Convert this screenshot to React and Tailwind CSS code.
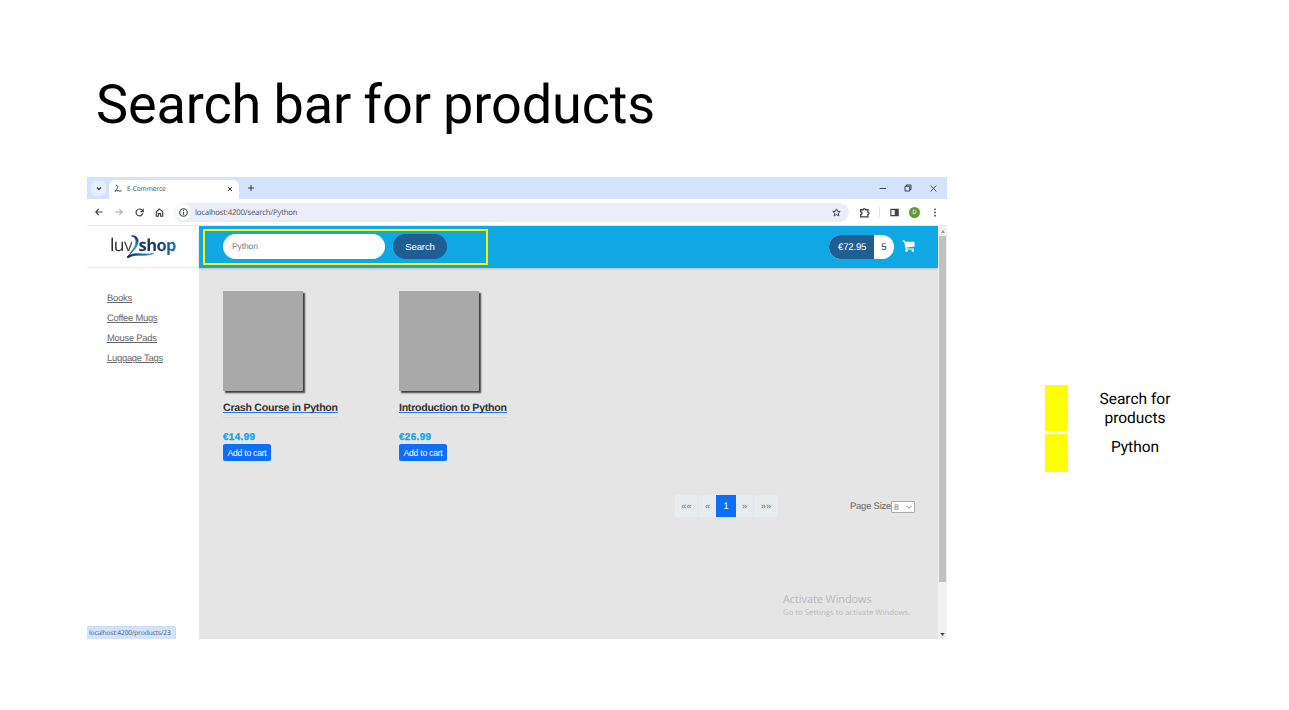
import React from "react";

const segoe = "font-['Open_Sans','Noto_Sans',sans-serif]";

function Stroke({ className, children, width = 1.2, box = "0 0 12 12" }) {
  return (
    <svg viewBox={box} className={`shrink-0 ${className}`} fill="none" stroke="currentColor" strokeWidth={width}>
      {children}
    </svg>
  );
}

function TabStrip() {
  return (
    <div className="flex h-[22px] shrink-0 bg-[#d3e3fd] text-[#303236]">
      <div className="mt-[4px] ml-[4px] flex h-[15px] w-[15px] items-center justify-center rounded-[5px] bg-[#e6effe]">
        <Stroke className="h-[6px] w-[6px]" width={2.2}><path d="M2 3l4 4 4-4" /></Stroke>
      </div>
      <div className="mt-[3px] ml-[3px] flex h-[19px] w-[130px] items-center rounded-t-[6px] bg-white pr-[6px] pb-[2px] pl-[5px]">
        <svg viewBox="0 0 10 10" className="h-[9px] w-[8px] shrink-0" fill="none">
          <path d="M2 1.2C5 0 5.6 3 4 5L1.5 8.2" stroke="#1577bd" strokeWidth="1.2" />
          <path d="M1 8.8C4 6.2 6 9 9.5 8" stroke="#183f70" strokeWidth="1.2" />
        </svg>
        <span className={`${segoe} ml-[5px] flex-1 text-[6.7px] leading-[10px] tracking-[-0.12px] text-[#45474b]`}>E-Commerce</span>
        <Stroke className="h-[6px] w-[6px]" width={2}><path d="M2 2l8 8M10 2l-8 8" /></Stroke>
      </div>
      <Stroke className="mt-[8px] ml-[9px] h-[6px] w-[6px]" width={1.9}><path d="M6 0v12M0 6h12" /></Stroke>
      <div className="mt-[8px] mr-[10px] ml-auto flex h-[6px] items-center gap-[18px]">
        <Stroke className="h-[7px] w-[7px]" width={1.5}><path d="M1 6h11" /></Stroke>
        <Stroke className="h-[8px] w-[8px]" width={1.4}><path d="M1.5 3.5h7v7h-7zM3.5 3V1.5h7v7H9" /></Stroke>
        <Stroke className="h-[7px] w-[7px]" width={1.4}><path d="M1 1l10 10M11 1L1 11" /></Stroke>
      </div>
    </div>
  );
}

function Toolbar() {
  return (
    <div className="flex h-[27px] shrink-0 items-center border-b border-[#e7ebf1] bg-white text-[#3d4043]">
      <Stroke className="ml-[8px] h-[8px] w-[8px]" width={1.6}><path d="M11.5 6H1M5.5 1.5L1 6l4.5 4.5" /></Stroke>
      <Stroke className="ml-[12px] h-[8px] w-[8px] text-[#8f9194]" width={1.4}><path d="M.5 6H11M6.5 1.5L11 6l-4.5 4.5" /></Stroke>
      <Stroke className="ml-[12px] h-[9px] w-[9px]" width={1.5}><path d="M10.4 7.2A4.6 4.6 0 1 1 9.5 3L11 4.6M11 1v3.8H7.2" /></Stroke>
      <Stroke className="ml-[11px] h-[9px] w-[9px]" width={1.5}><path d="M1.7 5L6 1.2 10.3 5v6H7.5V7.5h-3V11H1.7z" /></Stroke>
      <div className="ml-[10px] flex h-[19px] w-[675px] items-center rounded-full bg-[#ebeef7] pr-[8px] pl-[1px]">
        <div className="flex h-[16px] w-[16px] items-center justify-center rounded-full bg-white">
          <Stroke className="h-[9px] w-[9px]" width={1.5}><circle cx="6" cy="6" r="5" /><path d="M6 5.2V9M6 2.8v1.4" /></Stroke>
        </div>
        <span className={`${segoe} ml-[4px] flex-1 pt-[1px] text-[7.8px] leading-[12px] tracking-[-0.2px] text-[#505257]`}>localhost:4200/search/Python</span>
        <Stroke className="h-[9px] w-[9px]" width={1.3}><path d="M6 1.2l1.4 3.2 3.5.3-2.6 2.4.8 3.5L6 8.8l-3.1 1.8.8-3.5L1.1 4.7l3.5-.3z" /></Stroke>
      </div>
      <Stroke className="ml-[10px] h-[11px] w-[11px]" width={1.4}><path d="M1.8 3h2.7a1.3 1.3 0 0 1 2.6 0h2.6v2.6a1.3 1.3 0 0 1 0 2.6v2.6H1.8V8.4a1.5 1.5 0 0 0 0-3z" /></Stroke>
      <div className="ml-[9px] h-[10px] w-px bg-[#d3e3fd]" />
      <Stroke className="ml-[10px] h-[9px] w-[9px]" width={1.5}><path d="M1.2 1.8h9.6v8.4H1.2z" /><path d="M7 2h3.5v8H7z" fill="currentColor" /></Stroke>
      <div className="ml-[10px] flex h-[11px] w-[11px] items-center justify-center rounded-full bg-[#5f9c34] pt-[1px] font-['Roboto',sans-serif] text-[6px] leading-none text-white">D</div>
      <svg viewBox="0 0 4 12" className="ml-[13px] h-[9px] w-[4px]" fill="currentColor"><circle cx="2" cy="1.8" r="1.2" /><circle cx="2" cy="6" r="1.2" /><circle cx="2" cy="10.2" r="1.2" /></svg>
    </div>
  );
}

function Logo() {
  return (
    <div className="relative ml-[23px] mt-[8px] flex h-[25px] w-[67px] leading-[22px]">
      <span className="w-[22px] bg-gradient-to-r from-[#111] to-[#555] bg-clip-text font-['Open_Sans',sans-serif] text-[17.5px] tracking-[-0.6px] text-transparent">luv</span>
      <span className="ml-[6.5px] bg-gradient-to-r from-[#173768] via-[#173768] to-[#1780c0] bg-clip-text font-['Open_Sans',sans-serif] text-[16.5px] font-bold tracking-[-0.55px] text-transparent">shop</span>
      <svg viewBox="0 0 44 26" className="absolute top-[1px] left-[15px] h-[26px] w-[44px]" fill="none">
        <defs>
          <linearGradient id="swoosh" x1="0" x2="1"><stop stopColor="#0b1525" /><stop offset=".4" stopColor="#16589a" /><stop offset="1" stopColor="#36a9df" /></linearGradient>
          <linearGradient id="stem" x1="0" y1="0" x2="0" y2="1"><stop stopColor="#0f2a55" /><stop offset=".45" stopColor="#1a8fd0" /><stop offset="1" stopColor="#16589a" /></linearGradient>
        </defs>
        <path d="M6.5.8C14 .4 15 7 10.5 13L2.5 22l5.5-7.5C12 9 12.5 2.5 6.5.8z" fill="url(#stem)" stroke="url(#stem)" strokeWidth=".8" />
        <path d="M2 22.3C9 15.5 18 20.8 29 18.3c-10 4.4-17.4-.6-25.4 4.2z" fill="url(#swoosh)" stroke="url(#swoosh)" strokeWidth=".8" />
      </svg>
    </div>
  );
}

function Sidebar() {
  return (
    <aside className="flex w-[112px] shrink-0 flex-col bg-white">
      <div className="h-[42px] shrink-0 border-b border-[#ececec] shadow-[0_1px_2px_#0000000d]"><Logo /></div>
      <nav className="mt-[20px] flex flex-col pl-[20px] text-[9.4px] leading-[20.1px] tracking-[-0.24px] text-[#666] underline">
        <a>Books</a>
        <a>Coffee Mugs</a>
        <a>Mouse Pads</a>
        <a>Luggage Tags</a>
      </nav>
      <div className={`${segoe} mt-auto h-[13px] w-[89px] rounded-tr-[3px] border-t border-r border-[#c9d9f3] bg-[#d3e3fd] pl-[2px] text-[6.6px] leading-[12px] tracking-[-0.1px] text-[#55585f]`}>localhost:4200/products/23</div>
    </aside>
  );
}

function ShopHeader() {
  return (
    <header className="flex h-[42px] shrink-0 bg-[#0fa8e5] shadow-[0_1px_2px_#00000030]">
      <div className="mt-[3px] ml-[4px] flex h-[36px] w-[285px] items-center border-2 border-[#fff000] pb-[1px] pl-[18px]">
        <div className="flex h-[25px] w-[162px] items-center rounded-full bg-white pl-[9px] text-[8.5px] tracking-[-0.1px] text-[#777]">Python</div>
        <button className="ml-[8px] h-[25px] w-[54px] rounded-full bg-[#205d91] text-[9.6px] leading-[25px] tracking-[-0.15px] text-white">Search</button>
      </div>
      <div className="mt-[9px] mr-[8px] ml-auto flex h-[24px] w-[65px] overflow-hidden rounded-full bg-white text-[9.6px] leading-[25px]">
        <span className="w-[45px] bg-[#205d91] pl-[9px] tracking-[-0.18px] text-white">€72.95</span>
        <span className="flex-1 text-center text-[#333]">5</span>
      </div>
      <svg viewBox="0 0 13 12" className="mt-[14px] mr-[23px] h-[12px] w-[13px]" fill="white">
        <path d="M.4.5h2.3l.5 1.2h9.3v4.8L4.5 7.6l.2.8h7v1H3.8L2 1.5H.4z" />
        <circle cx="4.6" cy="10.6" r="1.2" /><circle cx="10.8" cy="10.6" r="1.2" />
      </svg>
    </header>
  );
}

function Product({ name, price }) {
  return (
    <div className="flex w-[176px] flex-col items-start">
      <div className="h-[100px] w-[80px] bg-[#a9a9a9] shadow-[2px_2px_1.5px_#444]" />
      <div className="mt-[10px] h-[17px] border-b border-[#d8d8d8] whitespace-nowrap">
        <div className="h-[12px] border-b border-[#2879ee] text-[10.6px] leading-[15px] font-bold tracking-[-0.27px] text-[#333]">{name}</div>
      </div>
      <div className="mt-[12px] h-[14px] text-[9.9px] leading-[15px] font-bold tracking-[0.38px] text-[#12a6e1] [-webkit-text-stroke:0.3px_#12a6e1]">{price}</div>
      <button className="h-[17px] w-[48px] rounded-[2px] bg-[#0d6efd] text-[8.6px] leading-[18px] tracking-[-0.24px] whitespace-nowrap text-white">Add to cart</button>
    </div>
  );
}

function Pagination() {
  return (
    <div className="mt-[34px] mr-[23px] ml-auto flex h-[22px] items-center text-[9.3px] text-[#666]">
      <div className="flex h-[22px] w-[103px] items-center text-center leading-[22px] text-[#6c757d]">
        <span className="h-[22px] w-[23px] rounded-l-[3px] bg-[#e9ecef]">««</span>
        <span className="h-[22px] w-[18px] border-l border-[#e2e6ea] bg-[#e9ecef]">«</span>
        <span className="h-[22px] w-[20px] bg-[#0d6efd] text-white">1</span>
        <span className="h-[22px] w-[18px] border-r border-[#e2e6ea] bg-[#e9ecef]">»</span>
        <span className="h-[22px] w-[24px] rounded-r-[3px] bg-[#e9ecef]">»»</span>
      </div>
      <span className="ml-[72px] w-[41px] pt-[3px] text-[9.5px] tracking-[-0.25px] whitespace-nowrap">Page Size</span>
      <div className="mt-[2px] flex h-[12px] w-[24px] items-center justify-between rounded-[1px] border border-[#aaa] bg-white px-[2px] text-[8.6px] leading-[10px] text-[#777]">
        8
        <Stroke className="h-[6px] w-[6px]" width={1.8}><path d="M1.5 4L6 8.5 10.5 4" /></Stroke>
      </div>
    </div>
  );
}

function Scrollbar() {
  return (
    <div className="flex w-[9px] shrink-0 flex-col items-center bg-[#f1f1f1]">
      <svg viewBox="0 0 6 4" className="mt-[4px] h-[3px] w-[4px]" fill="#888"><path d="M0 4l3-4 3 4z" /></svg>
      <div className="mt-[3px] h-[346px] w-[7px] bg-[#c1c1c1]" />
      <svg viewBox="0 0 6 4" className="mt-auto mb-[3px] h-[3px] w-[5px]" fill="#444"><path d="M0 0l3 4 3-4z" /></svg>
    </div>
  );
}

function Browser() {
  return (
    <div className="mt-[39px] ml-[87px] flex h-[462px] w-[860px] flex-col overflow-hidden">
      <TabStrip />
      <Toolbar />
      <div className="flex min-h-0 flex-1">
        <Sidebar />
        <main className="flex flex-1 flex-col bg-[#e5e5e5]">
          <ShopHeader />
          <div className="mt-[23px] ml-[24px] flex">
            <Product name="Crash Course in Python" price="€14.99" />
            <Product name="Introduction to Python" price="€26.99" />
          </div>
          <Pagination />
          <div className={`${segoe} mt-[76px] mr-[28px] ml-auto w-[127px] whitespace-nowrap text-[#b9b9b9]`}>
            <div className="text-[11px] leading-[14px] tracking-[-0.1px]">Activate Windows</div>
            <div className="text-[7.7px] leading-[12px] tracking-[0.04px]">Go to Settings to activate Windows.</div>
          </div>
        </main>
        <Scrollbar />
      </div>
    </div>
  );
}

function Legend() {
  return (
    <div className="mt-[247px] ml-[98px] h-[88px] w-[140px] font-['Roboto',sans-serif] text-[15.5px] text-black">
      <div className="flex h-[49px]">
        <div className="h-[46px] w-[23px] bg-[#ffff00]" />
        <div className="ml-[29px] w-[76px] pt-[5px] text-center leading-[19px]">Search for products</div>
      </div>
      <div className="flex h-[38px]">
        <div className="h-[38px] w-[23px] bg-[#ffff00]" />
        <div className="ml-[29px] w-[76px] pt-[4px] text-center leading-[19px]">Python</div>
      </div>
    </div>
  );
}

export default function App() {
  return (
    <div className="h-[710px] w-[1289px] overflow-hidden bg-white font-['Liberation_Sans',Arial,sans-serif] [text-rendering:geometricPrecision]">
      <h1 className="h-[138px] pt-[74px] pl-[96px] font-['Roboto',sans-serif] text-[54px] leading-[64px] tracking-[-0.12px] [word-spacing:-1px] whitespace-nowrap text-black">Search bar for products</h1>
      <div className="flex items-start">
        <Browser />
        <Legend />
      </div>
    </div>
  );
}
